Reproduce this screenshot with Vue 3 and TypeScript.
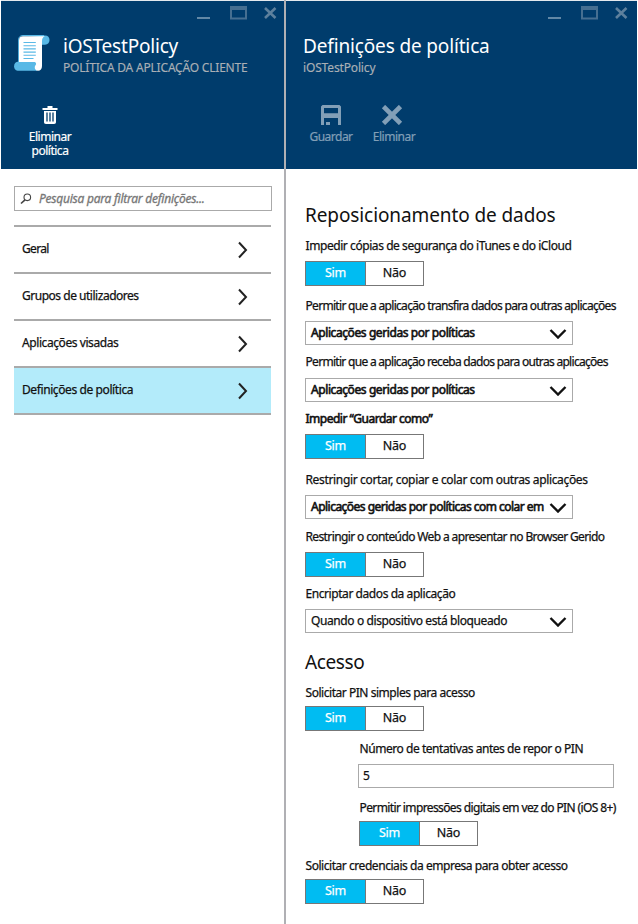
<script setup lang="ts">
interface Field {
  label: string
  kind: 'toggle' | 'select' | 'input'
  value?: string
  tracking: number
  valueTracking?: number
  bold?: boolean
  boldValue?: boolean
  indent?: boolean
  tight?: boolean
  loose?: boolean
}

const menu = [
  { label: 'Geral', tracking: -0.65, active: false },
  { label: 'Grupos de utilizadores', tracking: -0.48, active: false },
  { label: 'Aplicações visadas', tracking: -0.42, active: false },
  { label: 'Definições de política', tracking: -0.4, active: true },
]

const relocation: Field[] = [
  { label: 'Impedir cópias de segurança do iTunes e do iCloud', kind: 'toggle', tracking: -0.43 },
  { label: 'Permitir que a aplicação transfira dados para outras aplicações', kind: 'select', value: 'Aplicações geridas por políticas', boldValue: true, tracking: -0.69, valueTracking: -0.41 },
  { label: 'Permitir que a aplicação receba dados para outras aplicações', kind: 'select', value: 'Aplicações geridas por políticas', boldValue: true, loose: true, tracking: -0.7, valueTracking: -0.41 },
  { label: 'Impedir “Guardar como”', kind: 'toggle', bold: true, tracking: -0.5 },
  { label: 'Restringir cortar, copiar e colar com outras aplicações', kind: 'select', value: 'Aplicações geridas por políticas com colar em', boldValue: true, tracking: -0.34, valueTracking: -0.52 },
  { label: 'Restringir o conteúdo Web a apresentar no Browser Gerido', kind: 'toggle', tracking: -0.62 },
  { label: 'Encriptar dados da aplicação', kind: 'select', value: 'Quando o dispositivo está bloqueado', tracking: -0.43, valueTracking: -0.4 },
]

const access: Field[] = [
  { label: 'Solicitar PIN simples para acesso', kind: 'toggle', tight: true, tracking: -0.46 },
  { label: 'Número de tentativas antes de repor o PIN', kind: 'input', value: '5', indent: true, tracking: -0.45 },
  { label: 'Permitir impressões digitais em vez do PIN (iOS 8+)', kind: 'toggle', tight: true, indent: true, tracking: -0.61 },
  { label: 'Solicitar credenciais da empresa para obter acesso', kind: 'toggle', tight: true, tracking: -0.45 },
]

const sections = [
  { title: 'Reposicionamento de dados', name: 'relocation', fields: relocation },
  { title: 'Acesso', name: 'access', fields: access },
]

const spacing = (px = 0) => ({ letterSpacing: px + 'px' })
</script>

<template>
  <div class="portal">
    <section class="blade side">
      <header class="head">
        <div class="window">
          <svg width="82" height="14" viewBox="0 0 82 14"><path d="M0 12h13" stroke="#6288a6" stroke-width="2"/><path d="M34 1h15v11.500H34zM33 3h17" fill="none" stroke="#466f91" stroke-width="2"/><path d="M68 2l10.500 10M78.500 2L68 12" stroke="#5d809d" stroke-width="2.600"/></svg>
        </div>
        <div class="title">
          <svg class="scroll" width="36" height="37" viewBox="0 0 36 37">
            <path d="M9 .5h22c3 0 4.500 2 4.500 4.500S34 9.700 31 9.700h-4L25 2z" fill="#59b9e6"/>
            <path d="M3.500 26.700H23V35.700H3.500C-1 35.700-1 26.700 3.500 26.700z" fill="#59b9e6"/>
            <path d="M4.600 27V5c0-3 1.600-4.500 4.400-4.500h21" fill="none" stroke="#59b9e6"/>
            <path d="M5 27V5.500C5 2.500 6.500 1.200 9 1.200h22C28.500 1.800 28 4 28 6.500V31c0 3-1.500 4.700-4 4.700-2 0-3.700-1.700-3.200-4 .3-1.500 1.700-2 1.200-3.500-.3-.9-1-1.200-2-1.200z" fill="#fff"/>
            <path d="M9.500 7.500h12.300M9.500 10.700h12.300M9.500 13.900h12.300M9.500 17.100h12.300M9.500 20.300h12.300M9.500 23.500h10" stroke="#59b9e6" stroke-width="1.100"/>
          </svg>
          <div>
            <h1 class="name">iOSTestPolicy</h1>
            <p class="kind">POLÍTICA DA APLICAÇÃO CLIENTE</p>
          </div>
        </div>
        <div class="actions">
          <button class="action white">
            <svg width="16" height="20" viewBox="0 0 16 20"><path d="M.5 3h15v2H.5zM5.500 1h5v2h-5zM2 6h12v11c0 1.200-.6 2-2 2H4c-1.400 0-2-.8-2-2z" fill="#fff"/><path d="M5 7.500v9M8 7.500v9M11 7.500v9" stroke="#003c6c" stroke-width="1.300"/></svg>
            <span>Eliminar política</span>
          </button>
        </div>
      </header>
      <div class="search">
        <svg width="12" height="12" viewBox="0 0 12 12"><circle cx="7.300" cy="4.300" r="3.300" fill="none" stroke="#444" stroke-width="1.100"/><path d="M5 6.800L1 10.500" stroke="#444" stroke-width="1.600"/></svg>
        <span>Pesquisa para filtrar definições...</span>
      </div>
      <nav class="menu">
        <a v-for="m in menu" :key="m.label" :class="{ active: m.active }">
          <span :style="spacing(m.tracking)">{{ m.label }}</span>
          <svg width="10" height="18" viewBox="0 0 10 18"><path d="M1 1.500l7 7.500-7 7.500" fill="none" stroke="#222" stroke-width="2"/></svg>
        </a>
      </nav>
    </section>

    <section class="blade main">
      <header class="head">
        <div class="window">
          <svg width="82" height="14" viewBox="0 0 82 14"><path d="M0 12h13" stroke="#6288a6" stroke-width="2"/><path d="M34 1h15v11.500H34zM33 3h17" fill="none" stroke="#466f91" stroke-width="2"/><path d="M68 2l10.500 10M78.500 2L68 12" stroke="#5d809d" stroke-width="2.600"/></svg>
        </div>
        <div class="title">
          <div>
            <h1>Definições de política</h1>
            <p>iOSTestPolicy</p>
          </div>
        </div>
        <div class="actions">
          <button class="action">
            <svg width="20" height="20" viewBox="0 0 20 20"><path fill-rule="evenodd" d="M1.500 0h17L20 1.500V20h-3v-7H3v7H0V1.500zM3 3v5.300h14V3zM5 17h4v3H5z" fill="#829fb7"/></svg>
            <span>Guardar</span>
          </button>
          <button class="action discard">
            <svg width="22" height="20" viewBox="0 0 22 20"><path d="M2.500 1.500l17 17M19.500 1.500l-17 17" stroke="#829fb7" stroke-width="4.600"/></svg>
            <span>Eliminar</span>
          </button>
        </div>
      </header>
      <div v-for="s in sections" :key="s.name" class="section" :class="s.name">
        <h2>{{ s.title }}</h2>
        <div v-for="f in s.fields" :key="f.label" class="field" :class="{ indent: f.indent, tight: f.tight, loose: f.loose }">
          <label :class="{ bold: f.bold }" :style="spacing(f.tracking)">{{ f.label }}</label>
          <div v-if="f.kind === 'toggle'" class="toggle"><span class="on">Sim</span><span class="off">Não</span></div>
          <div v-else-if="f.kind === 'select'" class="select" :class="{ bold: f.boldValue }">
            <span :style="spacing(f.valueTracking)">{{ f.value }}</span>
            <svg width="18" height="12" viewBox="0 0 18 12"><path d="M1.500 3L9 10.500 16.500 3" fill="none" stroke="#111" stroke-width="2.400"/></svg>
          </div>
          <div v-else class="input">{{ f.value }}</div>
        </div>
      </div>
    </section>
  </div>
</template>

<style>
body { margin: 0; background: #fff; }
</style>
<style scoped>
.portal { display: grid; grid-template-columns: 284px 354px; width: 638px; height: 924px; overflow: hidden; font: 12px/20px "Noto Sans", "Open Sans", sans-serif; color: #111; white-space: nowrap; }
h1, h2, p { margin: 0; font-weight: 400; }
svg { flex: none; }
.head { box-sizing: border-box; height: 169px; background: #003c6c; border-top: 1px solid #e4e9ee; }
.side .head { margin-left: 1px; }
.main { box-sizing: border-box; border-left: 2px solid #b0b0b4; }
.main .head { margin-right: 1px; }
.window { display: flex; justify-content: flex-end; padding: 5px 5px 0 0; height: 25px; }
.main .window { padding-right: 7px; }
.title { display: flex; padding-left: 13px; gap: 13px; height: 60px; }
.main .title { padding-left: 17px; }
.scroll { margin-top: 4px; }
h1 { color: #fff; font-size: 19px; line-height: 30px; letter-spacing: -0.15px; }
.name { letter-spacing: -0.2px; }
p { color: #a9afb5; font-size: 12px; line-height: 14px; letter-spacing: -0.15px; -webkit-text-stroke: 0.15px; }
.kind { letter-spacing: -0.2px; }
.actions { display: flex; padding: 14px 0 0 23px; gap: 11px; }
.main .actions { padding-left: 19px; }
.action { border: 0; background: none; padding: 0; width: 52px; display: flex; flex-direction: column; align-items: center; font: 12px/14px "Noto Sans", sans-serif; color: #829fb7; letter-spacing: -0.5px; -webkit-text-stroke: 0.2px; }
.action svg { margin-bottom: 5px; }
.discard svg { margin-left: -5px; }
.white { color: #fff; white-space: normal; }
.search { display: flex; align-items: center; box-sizing: border-box; width: 258px; height: 25px; margin: 17px 0 0 14px; border: 1px solid #aaa; padding-left: 5px; gap: 7px; font-style: italic; color: #777; letter-spacing: -0.24px; -webkit-text-stroke: 0.3px; }
.menu { margin: 14px 0 0 14px; width: 257px; border-bottom: 2px solid #aaa; -webkit-text-stroke: 0.25px; }
.menu a { display: flex; box-sizing: border-box; height: 47px; border-top: 2px solid #aaa; align-items: center; justify-content: space-between; padding: 0 23px 0 8px; }
.menu span { padding-bottom: 2px; }
.menu a.active { background: #b3ebfa; }
.section { display: grid; padding-left: 19px; -webkit-text-stroke: 0.25px; }
.relocation { padding-top: 31px; grid-template-rows: 36px 60px 56px 57px 61px 57px 57px 63px; }
.access { grid-template-rows: 36px 56px 59px 58px 48px; }
h2 { font-size: 19px; line-height: 30px; letter-spacing: -0.1px; -webkit-text-stroke: 0; }
.access h2 { letter-spacing: -0.4px; }
.field { display: flex; flex-direction: column; align-items: flex-start; gap: 5px; }
.tight { gap: 3px; }
.loose { gap: 6px; }
.indent { margin-left: 54px; }
label { padding-left: 0.5px; }
.bold { -webkit-text-stroke: 0.6px; }
.toggle { display: grid; grid-template-columns: 60px 57px; width: 117px; height: 23px; border: 1px solid #777; text-align: center; font-size: 12.5px; line-height: 22px; letter-spacing: -0.2px; }
.on { background: #00bcf2; color: #fff; border-right: 1px solid #777; }
.select { display: flex; justify-content: space-between; align-items: center; width: 256px; height: 22px; border: 1px solid #aaa; padding: 0 5px; }
.input { width: 250px; height: 22px; margin-left: -1px; border: 1px solid #aaa; padding-left: 4px; line-height: 21px; }
</style>
